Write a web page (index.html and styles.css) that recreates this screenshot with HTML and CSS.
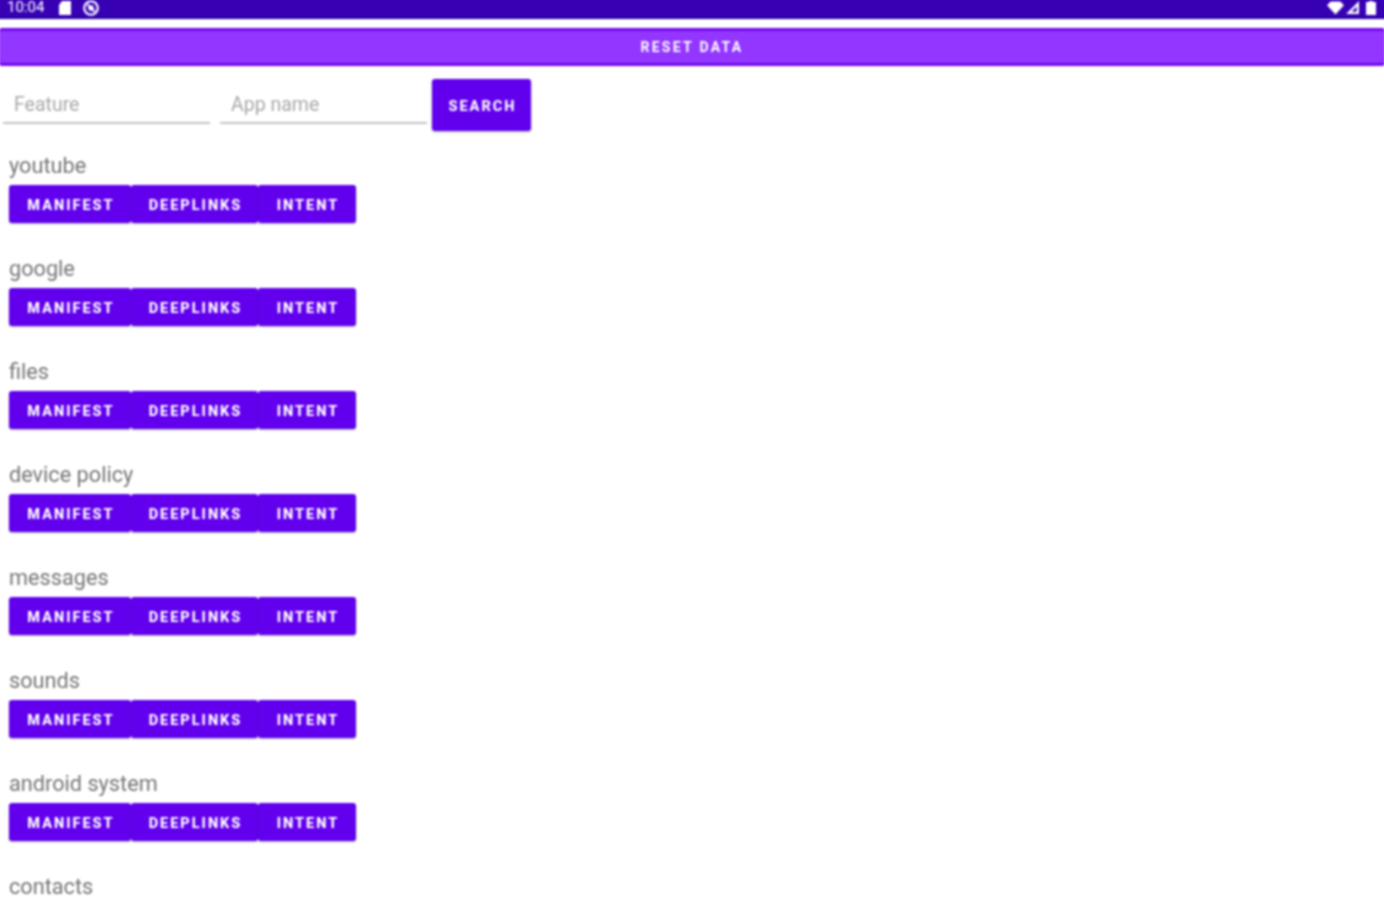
FILE: index.html
```html
<!DOCTYPE html>
<html lang="en">
<head>
<meta charset="utf-8">
<title>App list</title>
<link rel="stylesheet" href="styles.css">
</head>
<body>
<div class="page">
<div class="status">
  <div class="status-left">
    <span class="clock">10:04</span>
    <svg class="ic-sd" viewBox="0 0 14 16"><path d="M4 1h9v14H1V5z" fill="#fff"/></svg>
    <svg class="ic-sync" viewBox="0 0 20 20"><circle cx="10" cy="10" r="7.5" fill="none" stroke="#fff" stroke-width="2.4"/><circle cx="10" cy="10" r="3" fill="#fff"/><path d="M6 6l8 8" stroke="#fff" stroke-width="2"/></svg>
  </div>
  <div class="status-right">
    <svg class="ic-wifi" viewBox="0 0 18 14"><path d="M0 4l4-4h10l4 4-9 10z" fill="#fff"/></svg>
    <svg class="ic-signal" viewBox="0 0 14 14"><path d="M14 0v14H0zM11.5 6L6 11.500h5.500z" fill="#fff" fill-rule="evenodd"/></svg>
    <svg class="ic-batt" viewBox="0 0 10 14"><path d="M3 0h4v1h3v13H0V1h3z" fill="#fff"/></svg>
  </div>
</div>
<button class="reset">RESET DATA</button>
<form class="search">
  <div class="field">Feature</div>
  <div class="field">App name</div>
  <button class="btn search-btn" type="button">SEARCH</button>
</form>
<main class="list">
  <section class="app"><h2 class="name">youtube</h2><div class="group"><button class="btn m">MANIFEST</button><button class="btn d">DEEPLINKS</button><button class="btn i">INTENT</button></div></section>
  <section class="app"><h2 class="name">google</h2><div class="group"><button class="btn m">MANIFEST</button><button class="btn d">DEEPLINKS</button><button class="btn i">INTENT</button></div></section>
  <section class="app"><h2 class="name">files</h2><div class="group"><button class="btn m">MANIFEST</button><button class="btn d">DEEPLINKS</button><button class="btn i">INTENT</button></div></section>
  <section class="app"><h2 class="name">device policy</h2><div class="group"><button class="btn m">MANIFEST</button><button class="btn d">DEEPLINKS</button><button class="btn i">INTENT</button></div></section>
  <section class="app"><h2 class="name">messages</h2><div class="group"><button class="btn m">MANIFEST</button><button class="btn d">DEEPLINKS</button><button class="btn i">INTENT</button></div></section>
  <section class="app"><h2 class="name">sounds</h2><div class="group"><button class="btn m">MANIFEST</button><button class="btn d">DEEPLINKS</button><button class="btn i">INTENT</button></div></section>
  <section class="app"><h2 class="name">android system</h2><div class="group"><button class="btn m">MANIFEST</button><button class="btn d">DEEPLINKS</button><button class="btn i">INTENT</button></div></section>
  <section class="app"><h2 class="name">contacts</h2></section>
</main>
</div>
</body>
</html>
```
FILE: styles.css
```css
* { box-sizing: border-box; }
html, body { margin: 0; height: 900px; overflow: hidden; background: #fff; }
body { font-family: Roboto, "Liberation Sans", sans-serif; }
.page { width: 1392px; height: 908px; margin: -4px; padding: 4px; overflow: hidden; filter: blur(0.8px); }
.status { height: 23px; margin: -4px -4px 0; background: #3700b3; border-bottom: 2px solid #2a00a0; display: flex; justify-content: space-between; align-items: flex-start; padding: 4px 12px 0 11px; color: #fff; }
.status-left, .status-right { display: flex; align-items: center; height: 15px; }
.clock { font-size: 15px; line-height: 15px; }
.ic-sd { width: 14px; height: 16px; margin-left: 14px; }
.ic-sync { width: 18px; height: 18px; margin-left: 10px; }
.ic-wifi { width: 17px; height: 14px; }
.ic-signal { width: 13px; height: 13px; margin-left: 2px; }
.ic-batt { width: 10px; height: 14px; margin-left: 7px; }
.reset { display: block; width: calc(100% + 2px); height: 38px; margin: 9px -1px 0; padding: 0; border: 0; border-top: 3px solid #7208ee; border-bottom: 3px solid #7208ee; border-radius: 3px; background: #9336ff; color: #fff; font: 700 14px/1 Roboto, sans-serif; letter-spacing: 2.300px; }
.search { display: flex; align-items: flex-start; margin-top: 13px; padding-left: 3px; }
.field { width: 207px; height: 45px; margin-right: 10px; padding: 15px 0 0 11px; border-bottom: 2px solid #c4c4c4; color: #a8a8a8; font-size: 19.500px; line-height: 22px; }
.field + .field { margin-right: 5px; }
.btn { border: 0; padding: 3px 0 0 2px; background: #6200ee; color: #fff; font: 800 14.500px/1 Roboto, sans-serif; letter-spacing: 2px; }
.search-btn { width: 99px; height: 52px; padding-top: 4px; border-radius: 3px; box-shadow: 0 1px 3px rgba(0,0,0,.3); }
.list { margin-top: 21px; padding-left: 9px; display: flex; flex-direction: column; }
.app { height: 103px; }
.name { margin: 0; height: 33px; color: #757575; font-size: 21.700px; font-weight: 400; line-height: 27px; }
.group { display: flex; height: 38px; }
.group .btn { height: 38px; padding-top: 5px; border-radius: 3px; box-shadow: 0 1px 2px rgba(0,0,0,.3); }
.m { width: 122px; }
.d { width: 127px; }
.i { width: 98px; }
```
